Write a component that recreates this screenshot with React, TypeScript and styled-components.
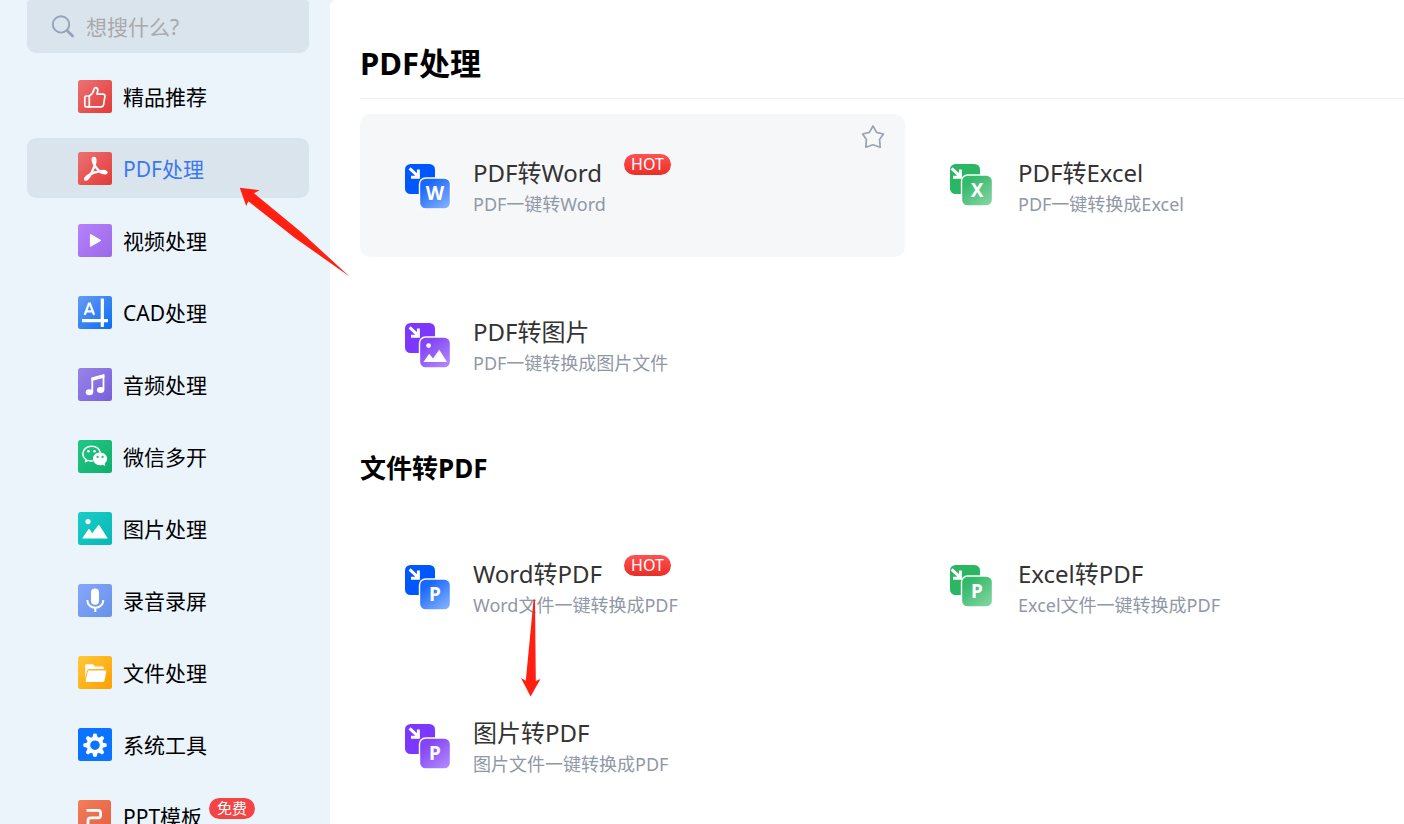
import React from 'react';
import styled, { createGlobalStyle } from 'styled-components';

const GlobalStyle = createGlobalStyle`
  *, *::before, *::after { box-sizing: border-box; }
  body {
    margin: 0;
    background: #fff;
    color: #000;
    font-family: "Noto Sans", "Noto Sans CJK SC", sans-serif;
  }
  h1, h2, h3, p, ul { margin: 0; padding: 0; }
  ul { list-style: none; }
`;

const Shell = styled.div`
  position: relative;
  display: flex;
  height: 100vh;
  overflow: hidden;
  background: #ebf3fb;
`;

const Sidebar = styled.aside`
  flex: 0 0 330px;
  padding: 0 21px 0 27px;
  overflow: hidden;
`;

const SearchBox = styled.label`
  display: flex;
  align-items: center;
  gap: 11px;
  height: 53px;
  padding: 0 24px;
  border-radius: 4px 4px 9px 9px;
  background: #dae4ec;
`;

const SearchInput = styled.input`
  flex: 1;
  min-width: 0;
  padding: 0;
  border: 0;
  outline: 0;
  background: transparent;
  font: inherit;
  font-size: 21px;
  line-height: 30px;
  &::placeholder { color: #a9a9a9; opacity: 1; }
`;

const NavList = styled.ul`
  display: flex;
  flex-direction: column;
  gap: 12px;
  padding-top: 13px;
`;

const NavLink = styled.a<{ $active?: boolean }>`
  display: flex;
  align-items: center;
  gap: 11px;
  height: 60px;
  padding-left: 51px;
  border-radius: 9px;
  background: ${(p) => (p.$active ? '#dae4ec' : 'transparent')};
  color: ${(p) => (p.$active ? '#3a78f2' : '#000')};
  font-size: 21px;
  line-height: 32px;
  text-decoration: none;
  white-space: nowrap;
  svg { flex: none; }
`;

const NavLabel = styled.span`
  padding-top: 2px;
`;

const FreeBadge = styled.span`
  align-self: flex-start;
  margin: 12px 0 0 -4px;
  padding: 0 8px;
  border-radius: 11px;
  background: #f34446;
  color: #fff;
  font-size: 15px;
  line-height: 21px;
`;

const Main = styled.main`
  flex: 1;
  min-width: 0;
  padding-left: 30px;
  overflow: hidden;
  border-top-left-radius: 6px;
  background: #fff;
`;

const PageTitle = styled.h1`
  height: 99px;
  padding-top: 41px;
  border-bottom: 1px solid #f1f1f3;
  font-size: 31px;
  font-weight: 700;
  line-height: 44px;
`;

const SectionTitle = styled.h2`
  padding: 32px 0 27px;
  font-size: 26px;
  font-weight: 700;
  line-height: 40px;
`;

const CardGrid = styled.div<{ $spaced?: boolean }>`
  display: grid;
  grid-template-columns: repeat(2, minmax(545px, 1fr));
  row-gap: 16px;
  padding-top: ${(p) => (p.$spaced ? '15px' : '0')};
`;

const Card = styled.article<{ $hovered?: boolean }>`
  position: relative;
  display: flex;
  align-items: center;
  gap: 22px;
  height: 143px;
  padding-left: 45px;
  border-radius: 10px;
  background: ${(p) => (p.$hovered ? '#f6f7f9' : 'transparent')};
`;

const CardText = styled.div`
  display: flex;
  flex-direction: column;
`;

const TitleRow = styled.div`
  display: flex;
  align-items: flex-start;
  gap: 22px;
`;

const CardTitle = styled.h3`
  color: #333;
  font-size: 24px;
  font-weight: 400;
  line-height: 38px;
`;

const CardDesc = styled.p`
  padding-bottom: 2px;
  color: #9097a6;
  font-size: 18px;
  line-height: 24px;
`;

const HotBadge = styled.span`
  padding: 0 7px;
  border-radius: 11px;
  background: linear-gradient(#ff5152, #e92f26);
  color: #fff;
  font-size: 16px;
  line-height: 21px;
`;

const StarButton = styled.button`
  position: absolute;
  top: 10px;
  right: 20px;
  display: flex;
  padding: 0;
  border: 0;
  background: none;
  cursor: pointer;
`;

const Pointer = styled.svg<{ $x: number; $y: number }>`
  position: absolute;
  left: ${(p) => p.$x}px;
  top: ${(p) => p.$y}px;
  pointer-events: none;
`;

type TileProps = { id: string; from: string; to: string; width?: number; children: React.ReactNode };

const Tile = ({ id, from, to, width = 34, children }: TileProps) => (
  <svg width="34" height="33" viewBox="0 0 34 33" fill="none" aria-hidden="true">
    <defs>
      <linearGradient id={id} x1="0" y1="0" x2="1" y2="1">
        <stop offset="0" stopColor={from} />
        <stop offset="1" stopColor={to} />
      </linearGradient>
    </defs>
    <rect width={width} height="33" rx="2.5" fill={`url(#${id})`} />
    {children}
  </svg>
);

const navItems: { label: string; active?: boolean; badge?: string; icon: React.ReactNode }[] = [
  {
    label: '精品推荐',
    icon: (
      <Tile id="nav-like" from="#ec7272" to="#e23a38">
        <g stroke="#fff" strokeWidth="1.7" strokeLinejoin="round" strokeLinecap="round">
          <path d="M11.3 16 Q15.2 13.6 15.9 9.4 Q16.3 7.4 17.9 7.6 Q20.2 8.2 19.7 11 L19 14.2 H25 Q27.3 14.4 26.9 16.6 L25.6 24.6 Q25.1 26.8 23 26.8 H8.2 Q6.8 26.8 6.8 25.4 V17.4 Q6.8 16 8.2 16 Z" />
          <path d="M11.3 16 V26.8" />
        </g>
      </Tile>
    ),
  },
  {
    label: 'PDF处理',
    active: true,
    icon: (
      <Tile id="nav-pdf" from="#ec7272" to="#e23a38">
        <path
          d="M16.2 5.9 C13.7 5.4 14.5 10 17.2 14.2 C20 18.8 24 21.6 27.4 21.4 C29.7 20.9 28.3 18.9 25 19 C18.8 19.4 12.8 21.5 9.2 24.2 C6.3 26.4 6.4 28.6 8.9 27.2 C12.2 24.8 16 16.3 17.1 11.3 C17.7 8.3 17.6 6.3 16.2 5.9 Z"
          stroke="#fff" strokeWidth="2.3" strokeLinejoin="round"
        />
      </Tile>
    ),
  },
  {
    label: '视频处理',
    icon: (
      <Tile id="nav-video" from="#b781fb" to="#9b69e8">
        <path d="M12.4 10.4 L22.8 16.4 L12.4 22.4 Z" fill="#fff" stroke="#fff" strokeLinejoin="round" />
      </Tile>
    ),
  },
  {
    label: 'CAD处理',
    icon: (
      <Tile id="nav-cad" from="#659cf5" to="#0b6df3">
        <g stroke="#fff">
          <path d="M24.3 2.5 V31 M4 24.6 H30" strokeWidth="3.2" />
          <path d="M6.7 18.8 L10.9 7.6 H11.9 L16.1 18.8 M8.3 15.4 H14.5" strokeWidth="2.2" />
        </g>
      </Tile>
    ),
  },
  {
    label: '音频处理',
    icon: (
      <Tile id="nav-audio" from="#9984e6" to="#775fdb">
        <path d="M14.3 24 V10.7 L25.5 7.5 V21.5" stroke="#fff" strokeWidth="1.8" strokeLinejoin="round" />
        <path d="M13.5 9.4 L26.4 6 V9.8 L13.5 13 Z" fill="#fff" />
        <ellipse cx="11.4" cy="24.2" rx="3.7" ry="3" fill="#fff" />
        <ellipse cx="22.6" cy="21.9" rx="3.7" ry="3" fill="#fff" />
      </Tile>
    ),
  },
  {
    label: '微信多开',
    icon: (
      <Tile id="nav-wechat" from="#21c884" to="#10ae6d">
        <path
          d="M14.5 20.9 Q12 21.2 10 20.4 L7.6 21.6 L8 19.4 Q4.8 17.3 4.8 13.8 C4.8 9.5 8.8 6.2 13.6 6.2 C18 6.2 21.3 8.8 22.2 12.3"
          stroke="#fff" strokeWidth="1.5" strokeLinecap="round" strokeLinejoin="round"
        />
        <path d="M22 12.4 C26 12.4 29.2 15.3 29.2 18.8 Q29.2 21.6 26.8 23.6 L27.2 26 L24.5 24.7 Q23.4 25.2 22 25.2 C18 25.2 14.9 22.3 14.9 18.8 S18 12.4 22 12.4 Z" fill="#fff" />
        <g fill="#fff"><circle cx="10.5" cy="11.2" r="1.3" /><circle cx="16.5" cy="11.2" r="1.3" /></g>
        <g fill="#18b976"><circle cx="19.6" cy="16.9" r="1.1" /><circle cx="24.6" cy="16.9" r="1.1" /></g>
      </Tile>
    ),
  },
  {
    label: '图片处理',
    icon: (
      <Tile id="nav-image" from="#1bcdc8" to="#07b8b6">
        <g fill="#fff">
          <circle cx="10" cy="9.6" r="2.6" />
          <path d="M4.2 26.6 L10.4 17.2 Q11 16.6 11.6 17.2 L14.2 21.2 L20.2 13.2 Q20.8 12.6 21.4 13.2 L29.8 26.6 Z" />
        </g>
      </Tile>
    ),
  },
  {
    label: '录音录屏',
    icon: (
      <Tile id="nav-record" from="#85a7fd" to="#6692e7">
        <rect x="13" y="4.6" width="8" height="16.2" rx="4" fill="#fff" />
        <path d="M9.3 16 C9.3 26.4 25.3 26.4 25.3 16 M17.3 24 V28" stroke="#fff" strokeWidth="2" />
      </Tile>
    ),
  },
  {
    label: '文件处理',
    icon: (
      <Tile id="nav-file" from="#ffc83a" to="#ff9f00">
        <path d="M7.2 22 V9.4 Q7.2 8.2 8.4 8.2 H14.8 L17.2 10.6 H24.6 Q25.8 10.6 25.8 11.8 V13 H11 Q9.4 13 9 14.6 Z" fill="#fff" />
        <path d="M11 14.4 H27.4 Q28.5 14.4 28.3 15.5 L26.5 24.6 Q26.2 25.9 25 25.9 H8.7 Q7.4 25.9 7.7 24.6 L9.8 15.4 Q10 14.4 11 14.4 Z" fill="#fff" />
      </Tile>
    ),
  },
  {
    label: '系统工具',
    icon: (
      <Tile id="nav-system" from="#0a73ff" to="#0a73ff">
        <g fill="#fff">
          {[0, 45, 90, 135, 180, 225, 270, 315].map((angle) => (
            <path key={angle} d="M14.2 10 L15.4 5.8 Q17 5 18.6 5.8 L19.8 10 Z" transform={`rotate(${angle} 17 17.2)`} />
          ))}
        </g>
        <circle cx="17" cy="17.2" r="6.6" stroke="#fff" strokeWidth="3.6" />
      </Tile>
    ),
  },
  {
    label: 'PPT模板',
    badge: '免费',
    icon: (
      <Tile id="nav-ppt" from="#f27d5c" to="#e4613f" width={33}>
        <path d="M8.5 10.4 H20 Q22.6 10.4 22.6 13 V15.2 Q22.6 17.8 20 17.8 H12.6 Q10 17.8 10 20.4 V27" stroke="#fff" strokeWidth="2.8" />
      </Tile>
    ),
  },
];

type Kind = 'blue' | 'green' | 'violet';

const palette: Record<Kind, { solid: string; overlap: string; light: string; shift: number }> = {
  blue: { solid: '#0057ff', overlap: '#1c68fb', light: '#86b4ff', shift: 15 },
  green: { solid: '#2ab663', overlap: '#35b96b', light: '#86d6a4', shift: 12 },
  violet: { solid: '#7d38ff', overlap: '#8445f5', light: '#b38bff', shift: 15 },
};

const ConvertIcon = ({ id, kind, glyph }: { id: string; kind: Kind; glyph?: string }) => {
  const c = palette[kind];
  const arrowShift = kind === 'green' ? -3 : 0;
  return (
    <svg width="46" height="46" viewBox="0 0 46 46" fill="none" aria-hidden="true">
      <defs>
        <linearGradient id={id} x1="0.1" y1="0" x2="0.9" y2="1">
          <stop offset="0.2" stopColor={c.overlap} />
          <stop offset="1" stopColor={c.light} />
        </linearGradient>
      </defs>
      <rect x="0" y="1" width="30" height="30" rx="5.5" fill={c.solid} />
      <path
        d="M4.6 5.4 L12.6 12.8 M13.4 6.4 V14.2 H6" stroke="#fff" strokeWidth="3"
        transform={`translate(${arrowShift} 0)`}
      />
      <g transform={`translate(${c.shift} ${c.shift})`}>
        <rect x="-0.5" y="0" width="31" height="31" rx="6" fill={`url(#${id})`} stroke="#fff" strokeWidth="1.4" />
        {glyph ? (
          <text x="15" y="21.8" textAnchor="middle" fill="#fff" fontSize="19" fontWeight="700">{glyph}</text>
        ) : (
          <g fill="#fff">
            <circle cx="8.6" cy="8.6" r="2.4" />
            <path d="M3.5 25 L9.2 16.8 L13 21.4 L19.3 12.8 L27 25 Z" />
          </g>
        )}
      </g>
    </svg>
  );
};

type Tool = { id: string; title: string; desc: string; kind: Kind; glyph?: string; hot?: boolean; hovered?: boolean };

const fromPdf: Tool[] = [
  { id: 'pdf-word', title: 'PDF转Word', desc: 'PDF一键转Word', kind: 'blue', glyph: 'W', hot: true, hovered: true },
  { id: 'pdf-excel', title: 'PDF转Excel', desc: 'PDF一键转换成Excel', kind: 'green', glyph: 'X' },
  { id: 'pdf-image', title: 'PDF转图片', desc: 'PDF一键转换成图片文件', kind: 'violet' },
];

const toPdf: Tool[] = [
  { id: 'word-pdf', title: 'Word转PDF', desc: 'Word文件一键转换成PDF', kind: 'blue', glyph: 'P', hot: true },
  { id: 'excel-pdf', title: 'Excel转PDF', desc: 'Excel文件一键转换成PDF', kind: 'green', glyph: 'P' },
  { id: 'image-pdf', title: '图片转PDF', desc: '图片文件一键转换成PDF', kind: 'violet', glyph: 'P' },
];

const ToolCard = ({ tool }: { tool: Tool }) => (
  <Card $hovered={tool.hovered}>
    <ConvertIcon id={tool.id} kind={tool.kind} glyph={tool.glyph} />
    <CardText>
      <TitleRow>
        <CardTitle>{tool.title}</CardTitle>
        {tool.hot && <HotBadge>HOT</HotBadge>}
      </TitleRow>
      <CardDesc>{tool.desc}</CardDesc>
    </CardText>
    {tool.hovered && (
      <StarButton type="button" aria-label="收藏">
        <svg width="24" height="26" viewBox="0 0 24 26" fill="none" stroke="#9ba4b2" strokeWidth="1.7" strokeLinejoin="round">
          <path d="M12 2 L15.6 8.4 L22.4 10 L18.6 15.6 L19.2 23.2 L12 20.8 L4.8 23.2 L5.4 15.6 L1.6 10 L8.4 8.4 Z" />
        </svg>
      </StarButton>
    )}
  </Card>
);

export default function App() {
  return (
    <>
      <GlobalStyle />
      <Shell>
        <Sidebar>
          <SearchBox>
            <svg width="24" height="24" viewBox="0 0 24 24" fill="none" stroke="#94a3bb" aria-hidden="true">
              <circle cx="10" cy="9.4" r="8.2" strokeWidth="1.9" />
              <path d="M16 15.6 L21.6 21" strokeWidth="2.8" strokeLinecap="round" />
            </svg>
            <SearchInput type="text" placeholder="想搜什么?" aria-label="搜索" />
          </SearchBox>
          <nav>
            <NavList>
              {navItems.map((item) => (
                <li key={item.label}>
                  <NavLink href="#" $active={item.active}>
                    {item.icon}
                    <NavLabel>{item.label}</NavLabel>
                    {item.badge && <FreeBadge>{item.badge}</FreeBadge>}
                  </NavLink>
                </li>
              ))}
            </NavList>
          </nav>
        </Sidebar>
        <Main>
          <PageTitle>PDF处理</PageTitle>
          <CardGrid $spaced>
            {fromPdf.map((tool) => <ToolCard key={tool.id} tool={tool} />)}
          </CardGrid>
          <SectionTitle>文件转PDF</SectionTitle>
          <CardGrid>
            {toPdf.map((tool) => <ToolCard key={tool.id} tool={tool} />)}
          </CardGrid>
        </Main>
        <Pointer $x={239} $y={186} width="112" height="92" viewBox="0 0 112 92" aria-hidden="true">
          <path d="M0.8 1.8 L20.5 4.3 L15 7.2 L62 46 L110.5 90.5 L56 52 L9.3 15.3 L7.2 20 Z" fill="#ff2012" />
        </Pointer>
        <Pointer $x={520} $y={598} width="22" height="100" viewBox="0 0 22 100" aria-hidden="true">
          <path d="M13.6 1.5 H15 L15.8 83 L20.5 81 L10.6 98.5 L1 80 L5.8 82.8 Z" fill="#ff2012" />
        </Pointer>
      </Shell>
    </>
  );
}
